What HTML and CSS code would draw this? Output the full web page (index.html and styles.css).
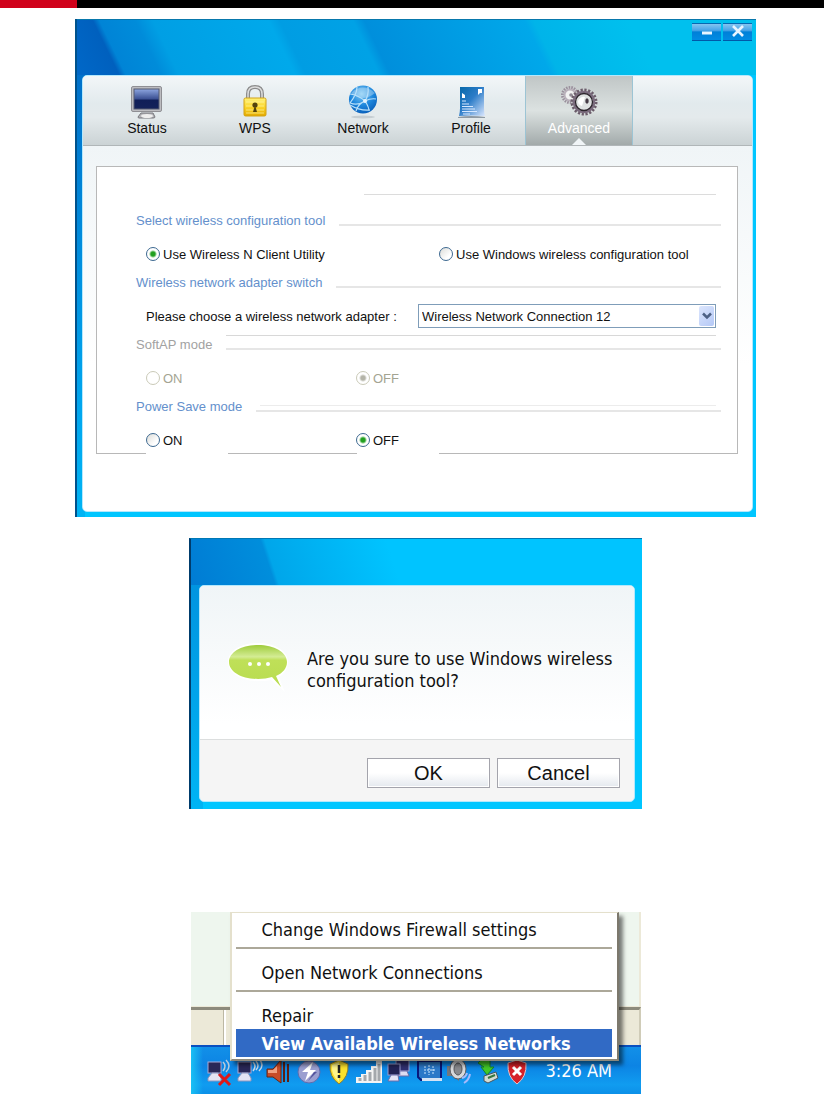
FILE: index.html
```html
<!DOCTYPE html>
<html lang="en">
<head>
    <meta charset="UTF-8">
    <meta name="viewport" content="width=device-width, initial-scale=1.0">
    <title>Wireless N Client Utility</title>
    <link rel="stylesheet" href="styles.css">
</head>
<body>
    <div class="page-bar"></div>

    <main>
        <section class="window">
            <header class="titlebar">
                <button class="win-btn" aria-label="Minimize">
                    <svg width="14" height="14" viewBox="0 0 14 14"><path d="M2 8h10" stroke="#e8f4ff" stroke-width="3"/></svg>
                </button>
                <button class="win-btn" aria-label="Close">
                    <svg width="14" height="14" viewBox="0 0 14 14"><path d="M2 1l10 10M12 1L2 11" stroke="#e8f4ff" stroke-width="2.6"/></svg>
                </button>
            </header>

            <div class="panel">
                <nav class="tabs">
                    <button class="tab">
                        <svg width="34" height="34" viewBox="0 0 34 34">
                            <defs>
                                <linearGradient id="screen" x1="0" y1="0" x2="0" y2="1"><stop offset="0" stop-color="#8ea6e0"/><stop offset=".5" stop-color="#3a4f92"/><stop offset=".55" stop-color="#101f58"/><stop offset="1" stop-color="#14225a"/></linearGradient>
                            </defs>
                            <path d="M11 28h12l2 4q0 1-2 1H9q-1 0-1-1z" fill="#b4b4b8" stroke="#77777c"/>
                            <ellipse cx="17" cy="31" rx="6" ry="2" fill="#eee"/>
                            <rect x="1.5" y="1.5" width="30" height="25" rx="1.5" fill="#bcbcc0" stroke="#8f8f94"/>
                            <rect x="4" y="4" width="25" height="20" fill="url(#screen)" stroke="#555a70"/>
                        </svg>
                        <span>Status</span>
                    </button>
                    <button class="tab">
                        <svg width="34" height="34" viewBox="0 0 34 34">
                            <defs>
                                <linearGradient id="gold" x1="0" y1="0" x2="0" y2="1"><stop offset="0" stop-color="#fff27a"/><stop offset=".5" stop-color="#fbd62c"/><stop offset="1" stop-color="#e3a900"/></linearGradient>
                            </defs>
                            <path d="M10 15V9q0-7 7-7t7 7v6" fill="none" stroke="#8c8c8c" stroke-width="4"/>
                            <path d="M10 15V9q0-7 7-7t7 7v6" fill="none" stroke="#dcdcdc" stroke-width="1.5"/>
                            <rect x="6" y="13" width="22" height="18" rx="1.5" fill="url(#gold)" stroke="#d2a216"/>
                            <path d="M8 17h18M8 21h18M8 25h18M8 28h18" stroke="#fff6a0" stroke-width=".7"/>
                            <circle cx="17" cy="20" r="2.6" fill="#54430c"/>
                            <path d="M17 20l2 7h-4z" fill="#54430c"/>
                        </svg>
                        <span>WPS</span>
                    </button>
                    <button class="tab">
                        <svg width="34" height="34" viewBox="0 0 34 34">
                            <defs>
                                <radialGradient id="globe" cx=".45" cy=".3" r=".7"><stop offset="0" stop-color="#7cc8f4"/><stop offset=".6" stop-color="#1c86dc"/><stop offset="1" stop-color="#0b62bc"/></radialGradient>
                            </defs>
                            <ellipse cx="17" cy="32" rx="12" ry="1.5" fill="#c6ced2"/>
                            <circle cx="17" cy="14.5" r="14" fill="url(#globe)"/>
                            <path d="M5 8Q17-3 29 8q-6 5-12 5T5 8z" fill="#fff" opacity=".3"/>
                            <path d="M4 9q8 1 15 7M19 16q4-6 3-14M19 16q6-3 11-2M19 16q4 6 4 10M19 16q-7 3-9 10M4 18q8 3 15-2M4 20q10 6 20 5M11 2q0 7-7 16" fill="none" stroke="#b8e0fa" stroke-width="1.2"/>
                            <circle cx="19" cy="16" r="2" fill="#e2f4ff"/>
                        </svg>
                        <span>Network</span>
                    </button>
                    <button class="tab">
                        <svg width="34" height="34" viewBox="0 0 34 34">
                            <defs>
                                <linearGradient id="doc" x1="0" y1="0" x2="1" y2="1"><stop offset="0" stop-color="#0668a8"/><stop offset=".45" stop-color="#2c7cc8"/><stop offset="1" stop-color="#dce8ff"/></linearGradient>
                            </defs>
                            <path d="M4 32q13-2 27 0v1H4z" fill="#8e9aa4"/>
                            <path d="M6 2h24v21q0 5 1 8-13-1-26 0 1-4 1-8z" fill="url(#doc)"/>
                            <path d="M24 4h4v4h-2l-2 2zM8 8l3 2v3H8z" fill="#fff"/>
                            <path d="M8 16h4M8 19h7M8 21.5h11M8 24h13M8 26.5h15M9 29h7" stroke="#d6e8ff"/>
                        </svg>
                        <span>Profile</span>
                    </button>
                    <button class="tab active">
                        <svg width="40" height="34" viewBox="0 0 40 34">
                            <circle cx="11" cy="10" r="7.5" fill="none" stroke="#9a8f9c" stroke-width="3" stroke-dasharray="1.5 1.1"/>
                            <circle cx="11" cy="10" r="5.5" fill="#f2f2f2" stroke="#b9b0ba" stroke-width="2"/>
                            <circle cx="12" cy="10" r="1.8" fill="#8f8892"/>
                            <circle cx="25" cy="17" r="12" fill="none" stroke="#6b5c6a" stroke-width="3" stroke-dasharray="2.2 1.57"/>
                            <circle cx="25" cy="17" r="10" fill="#dfe2e2" stroke="#7b6c7e" stroke-width="2.5"/>
                            <circle cx="25" cy="17" r="8.5" fill="none" stroke="#2d262d" stroke-width="1.3"/>
                            <ellipse cx="28" cy="16" rx="1.7" ry="2.7" fill="#453b45"/>
                            <path d="M19 16q3-5 7-4l-3 9q-4-1-4-5z" fill="#fff"/>
                        </svg>
                        <span>Advanced</span>
                    </button>
                </nav>

                <form class="settings">
                    <div class="box">
                        <div class="spacer"><span></span></div>

                        <h2 class="heading"><span>Select wireless configuration tool</span><i class="rule"></i></h2>
                        <div class="options wide">
                            <label><input type="radio" name="tool" checked>Use Wireless N Client Utility</label>
                            <label><input type="radio" name="tool">Use Windows wireless configuration tool</label>
                        </div>

                        <h2 class="heading"><span>Wireless network adapter switch</span><i class="rule"></i></h2>
                        <div class="adapter">
                            <label for="adapter">Please choose a wireless network adapter :</label>
                            <div class="select">
                                <select id="adapter">
                                    <option>Wireless Network Connection 12</option>
                                </select>
                                <span class="arrow"><svg width="10" height="8" viewBox="0 0 10 8"><path d="M1 1.5l4 4 4-4" fill="none" stroke="#4d6185" stroke-width="2.5"/></svg></span>
                            </div>
                        </div>

                        <h2 class="heading disabled"><span>SoftAP mode</span><i class="rule double"></i></h2>
                        <div class="options">
                            <label><input type="radio" name="softap" disabled>ON</label>
                            <label><input type="radio" name="softap" checked disabled>OFF</label>
                        </div>

                        <h2 class="heading"><span>Power Save mode</span><i class="rule double low"></i></h2>
                        <div class="options">
                            <label><input type="radio" name="power">ON</label>
                            <label><input type="radio" name="power" checked>OFF</label>
                        </div>
                    </div>
                    <div class="box-foot"><i></i><b></b><i></i><b></b><i></i></div>
                </form>
            </div>
        </section>

        <section class="dialog">
            <div class="dialog-panel">
                <div class="message">
                    <svg width="62" height="58" viewBox="0 0 62 58">
                        <defs>
                            <linearGradient id="bubble" x1="0" y1="0" x2="0" y2="1"><stop offset="0" stop-color="#9fcc3c"/><stop offset=".28" stop-color="#d4ec94"/><stop offset=".36" stop-color="#bfe058"/><stop offset="1" stop-color="#b8dc50"/></linearGradient>
                        </defs>
                        <path d="M31 2c17 0 30 8 30 19 0 7-4 12-9 15l6 15-14-12c-4 1-8 1-13 1C14 40 1 32 1 21S14 2 31 2z" fill="#fff"/>
                        <path d="M31 4c16 0 29 7 29 17 0 6-4 11-11 14l5 11-9-10c-4 1-9 2-14 2C15 38 2 31 2 21S15 4 31 4z" fill="url(#bubble)"/>
                        <circle cx="23" cy="23" r="2" fill="#fff"/><circle cx="32" cy="23" r="2" fill="#fff"/><circle cx="41" cy="23" r="2" fill="#fff"/>
                    </svg>
                    <p>Are you sure to use Windows wireless configuration tool?</p>
                </div>
                <div class="actions">
                    <button>OK</button>
                    <button>Cancel</button>
                </div>
            </div>
        </section>

        <section class="desktop">
            <div class="wallpaper"></div>
            <div class="statusbar"></div>
            <div class="taskbar">
                <svg width="30" height="30" viewBox="0 0 30 30">
                    <rect x="2" y="3" width="13" height="11" fill="#292757" stroke="#aaa9d5"/>
                    <path d="M6 14h6l3 5v3H2v-3z" fill="#e3e3f4" stroke="#8d95bd"/>
                    <path d="M17 3q4 4 0 9M20 1q6 6 0 12" fill="none" stroke="#b9cbdb" stroke-width="1.5"/>
                    <path d="M13 15l11 11M24 15L13 26" stroke="#e01818" stroke-width="3"/>
                </svg>
                <svg width="30" height="30" viewBox="0 0 30 30">
                    <rect x="2" y="3" width="13" height="11" fill="#292757" stroke="#aaa9d5"/>
                    <path d="M6 14h6l3 5v3H2v-3z" fill="#e3e3f4" stroke="#8d95bd"/>
                    <path d="M17 3q4 4 0 9M20 2q4 5 0 9M23 0q6 6 0 12" fill="none" stroke="#c9dbeb" stroke-width="1.5"/>
                </svg>
                <svg width="30" height="30" viewBox="0 0 30 30">
                    <path d="M1 10h6l8-9v23l-8-6H1z" fill="#c84c28" stroke="#642414"/>
                    <path d="M2 11h5l4-4v7H2z" fill="#f0a080"/>
                    <path d="M18 3v20M22 5v18" stroke="#5c2015" stroke-width="2"/>
                </svg>
                <svg width="30" height="30" viewBox="0 0 30 30">
                    <circle cx="13" cy="13" r="11" fill="#9b9fd0" stroke="#5f6dae"/>
                    <path d="M17 3L6 13h6l-3 9 11-11h-6z" fill="#fff"/>
                    <path d="M18 13h3l-9 9z" fill="#53549c"/>
                </svg>
                <svg width="30" height="30" viewBox="0 0 30 30">
                    <path d="M13 1l9 4q1 13-9 20Q3 18 4 5z" fill="#fce12c" stroke="#8b7c35"/>
                    <path d="M13 3v20Q5 16 6 6z" fill="#fff48a"/>
                    <path d="M13 6v8M13 16v3" stroke="#222" stroke-width="2.5"/>
                </svg>
                <svg width="30" height="30" viewBox="0 0 30 30">
                    <path d="M0 18h5v-3h5v-4h5V7h5V2h6v22H0z" fill="#f4f4f4"/>
                    <path d="M4 19v3M9 16v6M14 13v9M19 9v13M23 5v17" stroke="#a4a8ac" stroke-width="3"/>
                </svg>
                <svg width="30" height="30" viewBox="0 0 30 30">
                    <rect x="10" y="1" width="13" height="11" fill="#303070" stroke="#a5a6d5"/>
                    <path d="M14 12h7l2 5H12z" fill="#ddddf2" stroke="#6c6ca8"/>
                    <rect x="2" y="5" width="12" height="11" fill="#222254" stroke="#9a9bd0"/>
                    <path d="M5 16h7l1 6H2z" fill="#e4e4f8" stroke="#6c6ca8"/>
                </svg>
                <svg width="30" height="30" viewBox="0 0 30 30">
                    <path d="M2 2h23v19H5l-3-3z" fill="#2b78c8" stroke="#08187c" stroke-width="2"/>
                    <path d="M6 19h20v3H6z" fill="#d6e3f4"/>
                    <path d="M8 11h12M8 8h3M8 14h3M13 6v10M17 7v8" stroke="#d1eaff" stroke-dasharray="2 1"/>
                </svg>
                <svg width="30" height="30" viewBox="0 0 30 30">
                    <path d="M1 7h6l6-5v20l-6-5H1z" fill="#73777e"/>
                    <ellipse cx="12" cy="10" rx="8" ry="10" fill="#d7d8da" stroke="#5b5d62"/>
                    <ellipse cx="12" cy="10" rx="4" ry="6" fill="#88898d" stroke="#55565a"/>
                    <path d="M18 24q5-3 6-9M16 19q4-1 5-5" fill="none" stroke="#a5b9fa" stroke-width="2"/>
                </svg>
                <svg width="30" height="30" viewBox="0 0 30 30">
                    <path d="M2 4l4-4h8v8h4l-7 8-6-8h3z" fill="#42c828" stroke="#16822c"/>
                    <path d="M8 17l12-4 2 6-10 5-4-2z" fill="#d4dcd2" stroke="#4a565e"/>
                    <path d="M12 19l7-3" stroke="#37763f" stroke-width="2"/>
                </svg>
                <svg width="30" height="30" viewBox="0 0 30 30">
                    <path d="M11 1l9 3q1 14-9 21Q1 18 2 4z" fill="#d62028" stroke="#e4c4cc"/>
                    <path d="M7 8l8 8M15 8l-8 8" stroke="#fff" stroke-width="3"/>
                </svg>
                <span class="clock">3:26 AM</span>
            </div>

            <div class="menu">
                <button>Change Windows Firewall settings</button>
                <hr>
                <button>Open Network Connections</button>
                <hr>
                <button>Repair</button>
                <button class="selected">View Available Wireless Networks</button>
            </div>
        </section>
    </main>
</body>
</html>
```
FILE: styles.css
```css
* {
    margin: 0;
    padding: 0;
    box-sizing: border-box;
}

body {
    background: #fff;
    color: #111;
    font-family: "Liberation Sans", Arial, sans-serif;
    font-size: 13px;
}

button {
    border: none;
    background: none;
    font: inherit;
    color: inherit;
    cursor: pointer;
}

.page-bar {
    height: 8px;
    background: linear-gradient(to right, #d0021b 77px, #000 77px);
}

main {
    padding: 11px 68px 0 75px;
}

/* main window */
.window {
    padding: 0 3px 5px 5px;
    border-left: 2px solid #00528c;
    background: linear-gradient(#0068c4, #00a8f0 80%, #00b4f4) left / 8px 100% no-repeat, #00c6ff;
}

.titlebar {
    display: flex;
    justify-content: flex-end;
    gap: 2px;
    height: 56px;
    margin: 0 -3px 0 -5px;
    padding: 3px 4px;
    border-top: 1px solid #0878ac;
    background: linear-gradient(64deg,
        #0068c8 0, #0060be 38px,
        #0084d6 44px, #008cda 76px,
        #009fe4 92px, #00a9eb 196px,
        #009de3 206px, #00a2e6 272px,
        #008fdc 282px, #00a8ea 426px,
        #00b4e9 434px, #00c0ee 520px, #00c0ee);
}

.win-btn {
    display: flex;
    align-items: center;
    justify-content: center;
    width: 29px;
    height: 18px;
    border-top: 1px solid #0868b0;
    border-bottom: 1px solid #0058a8;
    background: linear-gradient(#84c4f0, #48a4e8 40%, #0080d8 50%, #008ce4);
}

.panel {
    border: 1px solid #b4e8fc;
    border-radius: 5px;
    background: linear-gradient(#f0f5f7 70px, #fff 290px);
    overflow: hidden;
}

.tabs {
    display: flex;
    height: 70px;
    padding-left: 10px;
    border-bottom: 1px solid #b0b6b8;
    background: linear-gradient(#f2f6f8, #e2eaed 40%, #e4eaec 60%, #cbd3d5);
}

.tab {
    display: flex;
    flex-direction: column;
    align-items: center;
    gap: 1px;
    flex: 0 1 108px;
    padding-top: 9px;
    font-size: 14px;
    line-height: 16px;
}

.tab.active {
    position: relative;
    border: 1px solid #9cc4d4;
    border-width: 0 1px;
    background: linear-gradient(#c0c6c6, #dce2e1 50%, #a2aaaa);
    color: #fff;
}

.tab.active::after {
    content: "";
    position: absolute;
    bottom: 0;
    border: 7px solid transparent;
    border-top: 0;
    border-bottom-color: #f0f5f7;
}

.settings {
    padding: 20px 14px 57px 13px;
}

.box {
    border: 1px solid #b8b8b8;
    border-bottom: 0;
    background: #fff;
}

.spacer {
    height: 38px;
    padding: 27px 21px 0 267px;
}

.spacer span {
    display: block;
    height: 1px;
    background: #dcdcdc;
}

.heading {
    display: flex;
    gap: 14px;
    height: 31px;
    padding: 0 16px 0 39px;
    color: #6490cc;
    font-size: 13px;
    font-weight: normal;
    line-height: 32px;
}

.heading.disabled {
    color: #a2a2a2;
}

.rule {
    flex: 1;
    height: 21px;
    border-bottom: 2px solid #e6e6e6;
}

.double::before {
    content: "";
    display: block;
    height: 6px;
    margin-right: 5px;
    border-bottom: 1px solid #d8d8d8;
}

.double.low::before {
    height: 14px;
    margin-left: 4px;
    border-color: #ececec;
}

.options,
.adapter {
    display: grid;
    grid-template-columns: 210px 1fr;
    align-items: center;
    height: 31px;
    padding: 5px 21px 0 49px;
}

.options.wide {
    grid-template-columns: 293px 1fr;
}

.options label {
    display: flex;
    align-items: center;
    gap: 3px;
}

input[type="radio"] {
    appearance: none;
    width: 14px;
    height: 14px;
    border: 1px solid #3c6890;
    border-radius: 50%;
    background: linear-gradient(135deg, #dcdcd8, #fff 70%);
}

input[type="radio"]:checked {
    background: radial-gradient(circle, #22a020 2px, #fff 4px);
}

input[type="radio"]:disabled {
    border-color: #cacab8;
    background: #fff;
}

input[type="radio"]:disabled:checked {
    background: radial-gradient(circle, #b4b4a8 2px, #fff 4px);
}

label:has(input:disabled) {
    color: #a4a492;
}

.adapter {
    grid-template-columns: 1fr 298px;
}

.select {
    position: relative;
}

select {
    appearance: none;
    display: block;
    width: 100%;
    height: 24px;
    padding: 0 24px 0 3px;
    border: 1px solid #7f9db9;
    border-radius: 0;
    background: #fff;
    color: #111;
    font: inherit;
}

.arrow {
    position: absolute;
    top: 2px;
    right: 2px;
    bottom: 2px;
    width: 15px;
    display: flex;
    align-items: center;
    justify-content: center;
    border-radius: 2px;
    background: linear-gradient(135deg, #dce6fd, #b4c8f6);
    pointer-events: none;
}

/* bottom edge of the box, broken under the radios */
.box-foot {
    display: grid;
    grid-template-columns: 50fr 82fr 129fr 82fr 299fr;
    height: 1px;
}

.box-foot i {
    background: #b8b8b8;
}

/* confirmation dialog */
.dialog {
    max-width: 453px;
    margin: 21px auto 0;
    padding: 46px 7px 7px 8px;
    border-top: 1px solid #0078b4;
    border-left: 2px solid #003c6c;
    background:
        linear-gradient(72deg, #007cd4, #008edc 80px, #00a6ea 84px, #00c4ff 200px, #00c4ff) top / 100% 46px no-repeat,
        linear-gradient(#008edc, #00b4f4) left / 12px 100% no-repeat,
        #00c6ff;
}

.dialog-panel {
    border: 1px solid #b4e8fc;
    border-radius: 5px;
    background: #f5f5f5;
    overflow: hidden;
}

.message {
    display: flex;
    align-items: center;
    gap: 18px;
    height: 154px;
    padding: 14px 8px 0 27px;
    border-bottom: 1px solid #dcdede;
    background: linear-gradient(#f0f5f7, #fff 90%);
    font-family: "DejaVu Sans Condensed", "DejaVu Sans", sans-serif;
    font-size: 18px;
    line-height: 22px;
}

.message svg {
    flex: none;
}

.actions {
    display: flex;
    justify-content: flex-end;
    gap: 7px;
    padding: 18px 14px 13px;
}

.actions button {
    width: 123px;
    height: 30px;
    border: 1px solid #a4a4ac;
    box-shadow: inset 0 0 0 1px #fff;
    background: linear-gradient(#fff 50%, #e4e8ee);
    font-size: 20px;
}

/* tray context menu */
.desktop {
    position: relative;
    max-width: 450px;
    margin: 103px auto 0;
    font-family: "DejaVu Sans Condensed", "DejaVu Sans", sans-serif;
}

.wallpaper {
    height: 95px;
    border-right: 2px solid #ece9d8;
    border-bottom: 1px solid #ece9d8;
    background: #eef6ee;
}

.statusbar {
    height: 38px;
    border-top: 3px solid #8c8a7c;
    border-right: 2px solid #d0ccb8;
    background: linear-gradient(to right, transparent 32px, #bcb8a4 32px, #bcb8a4 33px, #fff 33px, #fff 35px, transparent 35px), #ece9d8;
}

.taskbar {
    display: flex;
    height: 49px;
    padding: 12px 0 0 15px;
    border-top: 2px solid #0a50c0;
    background: linear-gradient(to right, #18c0f4, transparent 12px), linear-gradient(#1290e8, #0c84e4 40%, #109cf0 80%, #0c90e8);
    color: #fff;
}

.taskbar svg {
    flex: 0 0 30px;
}

.clock {
    padding-left: 10px;
    font-size: 18px;
    line-height: 24px;
    white-space: nowrap;
}

.menu {
    position: absolute;
    top: 0;
    left: 39px;
    right: 22px;
    padding: 2px 5px 2px 4px;
    border: 2px solid #e4e0cc;
    border-top-width: 1px;
    border-right-color: #7c786c;
    border-bottom-color: #8c887c;
    background: #fff;
    box-shadow: 4px 4px 4px rgba(0, 0, 0, 0.5);
}

.menu button {
    display: block;
    width: 100%;
    height: 28px;
    padding-left: 26px;
    font-size: 18px;
    text-align: left;
    white-space: nowrap;
}

.menu hr {
    margin: 4px 0 9px;
    border: 0;
    border-top: 2px solid #aca899;
}

.menu .selected {
    background: #316ac5;
    color: #fff;
    font-weight: bold;
}
```
